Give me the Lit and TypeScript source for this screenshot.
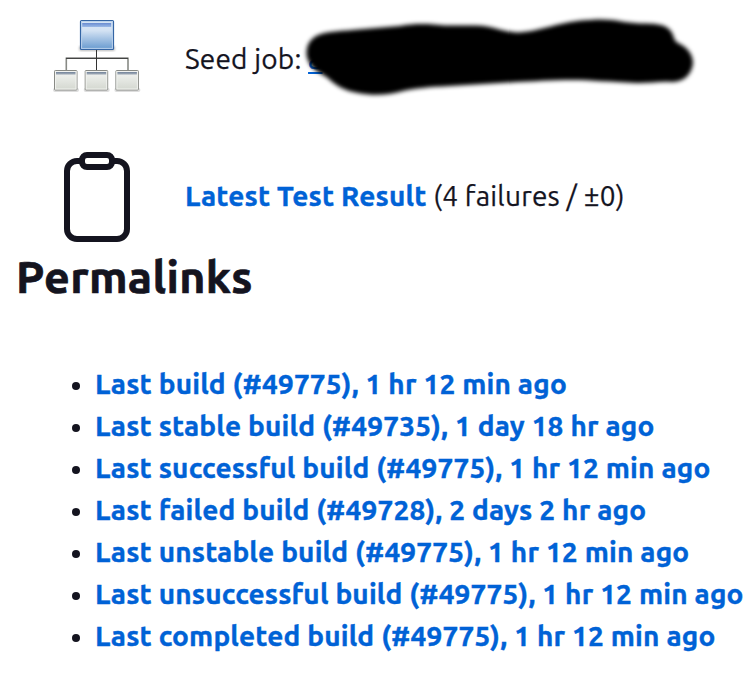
import { LitElement, html, css, svg } from "lit";
import { customElement } from "lit/decorators.js";

interface Permalink { label: string; build: string; age: string; }

const permalinks: Permalink[] = [
  { label: "Last build", build: "#49775", age: "1 hr 12 min ago" },
  { label: "Last stable build", build: "#49735", age: "1 day 18 hr ago" },
  { label: "Last successful build", build: "#49775", age: "1 hr 12 min ago" },
  { label: "Last failed build", build: "#49728", age: "2 days 2 hr ago" },
  { label: "Last unstable build", build: "#49775", age: "1 hr 12 min ago" },
  { label: "Last unsuccessful build", build: "#49775", age: "1 hr 12 min ago" },
  { label: "Last completed build", build: "#49775", age: "1 hr 12 min ago" },
];

@customElement("app-root")
export class AppRoot extends LitElement {
  static styles = css`
    :host {
      display: block;
      position: relative;
      width: 754px;
      height: 679px;
      overflow: hidden;
      background: #fff;
      color: #14141f;
      font: 28px/42px Ubuntu, "Noto Sans", sans-serif;
      letter-spacing: 0.18px;
      -webkit-text-stroke: 0.25px currentColor;
      white-space: nowrap;
    }
    .row { display: grid; grid-template-columns: 96px auto; column-gap: 41px; align-items: center; justify-content: start; padding-left: 48px; }
    .seed { height: 96px; padding-top: 8px; }
    .seed div { padding-top: 5px; }
    .tests { height: 96px; margin-top: 44px; letter-spacing: 0.22px; }
    svg { display: block; }
    a { color: #0062d6; font-weight: 700; text-decoration: none; -webkit-text-stroke: 0.4px #0062d6; }
    .seed a { font-weight: 400; text-decoration: underline; text-underline-offset: 3px; }
    h2 { margin: 2px 0 0 16px; font-size: 44.8px; line-height: 60px; font-weight: 700; letter-spacing: 0.35px; -webkit-text-stroke: 0.7px #14141f; }
    ul { list-style: none; margin: 57px 0 0; padding: 0 0 0 72px; }
    li { display: flex; align-items: center; height: 42px; }
    .dot { width: 8px; height: 8px; border-radius: 50%; background: #14141f; margin: 3px 15px 0 0; flex: none; }
    .scribble { position: absolute; left: 296px; top: 8px; }
  `;

  private node(x: number) {
    return svg`
      <rect x=${x - 1} y="88" width="26" height="4" rx="2" fill="#777" opacity=".25"/>
      <rect x=${x + 0.5} y="70.5" width="22.5" height="19.5" rx=".8" fill="url(#gray)" stroke="#888a85"/>
      <rect x=${x + 1.5} y="71.5" width="20.5" height="17.5" fill="none" stroke="#f1f2ef"/>
      <rect x=${x + 2} y="72" width="19.5" height="2.6" fill="url(#bar)"/>`;
  }

  render() {
    return html`
      <div class="row seed">
        <svg width="96" height="96" viewBox="48 8 96 96">
          <defs>
            <linearGradient id="blue" x2="0" y2="1"><stop stop-color="#d9e6f5"/><stop offset=".35" stop-color="#d3e2f3"/><stop offset="1" stop-color="#6699cf"/></linearGradient>
            <linearGradient id="cap" x2="0" y2="1"><stop stop-color="#698bd1"/><stop offset="1" stop-color="#9bb9e6"/></linearGradient>
            <linearGradient id="gray" x2="0" y2="1"><stop stop-color="#f5f6f4"/><stop offset="1" stop-color="#d3d7cf"/></linearGradient>
            <linearGradient id="bar" x2="0" y2="1"><stop stop-color="#71829a"/><stop offset="1" stop-color="#aab3bc"/></linearGradient>
            <filter id="soft"><feGaussianBlur stdDeviation="1"/></filter>
          </defs>
          <rect x="79" y="46" width="36" height="5" rx="2" fill="#555" opacity=".4" filter="url(#soft)"/>
          <path d="M66.3 70V58.3H128V70" fill="none" stroke="#888a85" stroke-width="1.6"/>
          <path d="M66 58.3H128M96.5 50V70" fill="none" stroke="#333" stroke-width="1"/>
          <rect x="80.5" y="20.5" width="33" height="29" rx="1" fill="url(#blue)" stroke="#3465a4" stroke-width="1.2"/>
          <rect x="81.6" y="21.6" width="30.8" height="26.8" fill="none" stroke="#b9d0ea"/>
          <rect x="82.2" y="23" width="29" height="4" fill="url(#cap)"/>
          ${[54, 84.7, 115.4].map((x) => this.node(x))}
        </svg>
        <div><span class="seed-label">Seed job:</span> <a>a</a></div>
      </div>
      <div class="row tests">
        <svg width="96" height="96" viewBox="48 148 96 96" fill="none" stroke="#14141f" stroke-width="6">
          <path d="M82 161H77a10 10 0 0 0-10 10v58a10 10 0 0 0 10 10h40a10 10 0 0 0 10-10v-58a10 10 0 0 0-10-10h-5"/>
          <rect x="82" y="155" width="30" height="12" rx="5"/>
        </svg>
        <div><a class="result">Latest Test Result</a> <span class="count">(4 failures / ±0)</span></div>
      </div>
      <h2>Permalinks</h2>
      <ul>
        ${permalinks.map((p) => html`<li><span class="dot"></span><a>${p.label} (${p.build}), ${p.age}</a></li>`)}
      </ul>
      <svg class="scribble" width="408" height="98" viewBox="296 8 408 98">
        <defs><filter id="brush"><feGaussianBlur stdDeviation="2"/></filter></defs>
        <path filter="url(#brush)" d="M306.500 53C306.500 43 312 37 321 34C331 31 343 31 358 29.500L400 26C417 23 430 24 445 25.500H475C493 25.500 502 32 517 32.500C540 32 560 21 590 20C614 18 620 22.500 640 23.500C659 23.500 668 25 672 33C675 38 673 41 680 44C690 49 693 57 693 63C692 73 686 81.500 672 82C658 81 650 83.500 636 83C610 82 590 80 573 80C550 80 533 81.500 517 82L450 86C428 87 415 88.500 403 91C390 95 373 96 358 93C345 91 337 86 330 80C324 74 319 74 313 68C308 62 306.500 57 306.500 53Z" fill="#000"/>
      </svg>`;
  }
}
